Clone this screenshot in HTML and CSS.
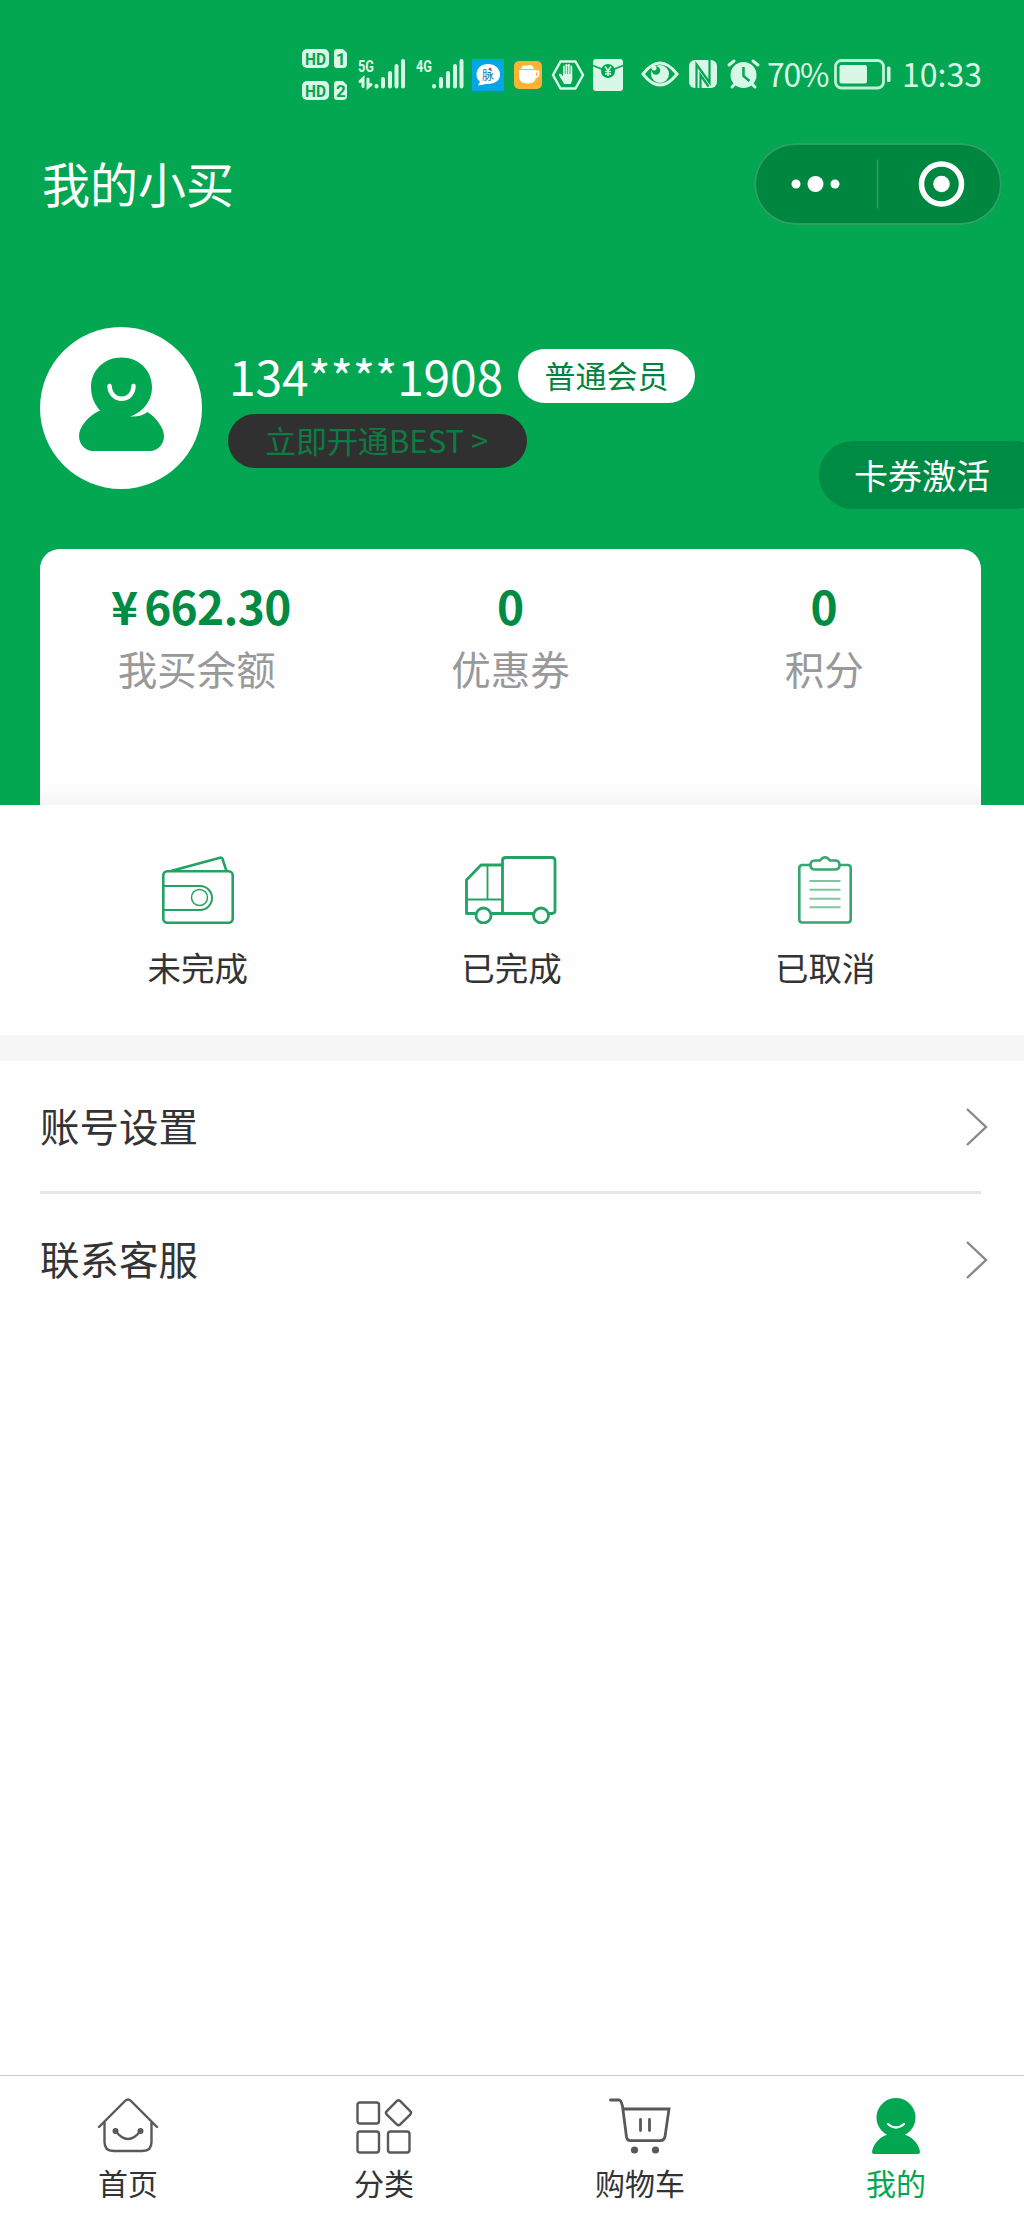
FILE: index.html
```html
<!DOCTYPE html>
<html lang="zh-CN">
<head>
<meta charset="utf-8">
<title>我的小买</title>
<link rel="stylesheet" href="styles.css">
</head>
<body>
<div class="page">
  <header class="hero">
    <div class="status">
      <svg class="status-icons" viewBox="300 45 462 60" width="462" height="60">
        <g fill="#d9f7e6">
          <rect x="302" y="49" width="27" height="19" rx="5"/><path d="M337 49h6l4 4v11a4 4 0 0 1-4 4h-6a3 3 0 0 1-3-3V52a3 3 0 0 1 3-3z"/>
          <rect x="302" y="81" width="27" height="19" rx="5"/><path d="M337 81h6l4 4v11a4 4 0 0 1-4 4h-6a3 3 0 0 1-3-3V84a3 3 0 0 1 3-3z"/>
        </g>
        <g class="tag" fill="#05a552">
          <text x="305" y="64.500" textLength="21" lengthAdjust="spacingAndGlyphs">HD</text><text x="336" y="64.500">1</text>
          <text x="305" y="96.500" textLength="21" lengthAdjust="spacingAndGlyphs">HD</text><text x="336" y="96.500">2</text>
        </g>
        <g class="net" fill="#d9f7e6">
          <text x="358" y="72" textLength="16" lengthAdjust="spacingAndGlyphs">5G</text><text x="416" y="72" textLength="16" lengthAdjust="spacingAndGlyphs">4G</text>
        </g>
        <g fill="none" stroke="#d9f7e6" stroke-width="4" stroke-linecap="round">
          <path d="M376.500 86v0.500M383 79v7.500M390 73v13.500M396.500 66v20.500M403 61v25.500M434 86v0.500M441 79v7.500M448 73v13.500M455 66v20.500M461.500 61v25.500"/>
          <path stroke-width="3" d="M363 86.500v-8l-3 3M368 79v8l3-2.500"/>
        </g>
        <rect x="472" y="59" width="32" height="32" fill="#05a6e6"/>
        <path fill="#fff" d="M488 64c7 0 12 4.500 12 10.500S495 84 488 84c-2 0-3 0-4 .5l-6 1 2-4c-3-2-3.500-4.500-3.500-7C476.500 68.500 481 64 488 64z"/>
        <text class="mai" x="482" y="79.500" fill="#1478b8">脉</text><circle cx="490" cy="69" r="1.300" fill="#e33"/>
        <rect x="514" y="61" width="28" height="28" rx="5" fill="#fcb232"/>
        <path fill="#fff" d="M519 70h17v6c0 5-3 7.500-8.500 7.500S519 81 519 76zM521 69c1-5 5-4 6-3 3-2 6-1 7 3z"/>
        <path fill="none" stroke="#fff" stroke-width="1.800" d="M535 71.500h3.500v2c0 3-2 4-4 4.500"/>
        <path fill="none" stroke="#d9f7e6" stroke-width="2.500" stroke-linejoin="round" d="M560.500 61.500h15l7.500 13.500-7.500 13.500h-15L553 75z"/>
        <path fill="#d9f7e6" d="M564 84c-1-3-4-6-5-9 0-2 2-1.500 3 0l1 1.500V67c0-2 2.200-2 2.200 0v-1.500c0-2 2.400-2 2.400 0v0c0-2 2.400-2 2.400 0v1.500c0-2 2.300-2 2.300 0v12c0 2-1 3.500-1.500 5z"/>
        <path stroke="#05a552" stroke-width=".7" d="M565.200 66v8M567.600 66v8M570 66v8"/>
        <rect x="593" y="59" width="30" height="32" rx="3" fill="#d9f7e6"/>
        <path fill="none" stroke="#05a552" stroke-width="1.800" d="M593 65.500l11 4.500M623 65.500l-11 4.500"/><circle cx="608" cy="71" r="7" fill="#05a552"/>
        <path fill="none" stroke="#d9f7e6" stroke-width="1.400" d="M605 66.500l3 4 3-4M608 70.500V76M605 71.500h6M605 74h6"/>
        <path fill="none" stroke="#d9f7e6" stroke-width="3" d="M643 74q17-22 34 0q-17 22-34 0z"/>
        <circle cx="660" cy="74" r="9" fill="#d9f7e6"/><circle cx="656" cy="70.500" r="4.200" fill="#05a552"/><circle cx="654" cy="68" r="2.500" fill="#d9f7e6"/>
        <rect x="689" y="60" width="28" height="28" rx="6" fill="#d9f7e6"/>
        <path fill="none" stroke="#05a552" stroke-width="2.200" d="M696.500 88V64.500l13 18M709.500 60v22.500l-13-18M700.500 88V75l8 11.500"/>
        <circle cx="743.500" cy="75" r="13" fill="#d9f7e6"/><path fill="none" stroke="#d9f7e6" stroke-width="3" stroke-linecap="round" d="M729 65l5-4M758 65l-5-4M735 84l-3 3M752 84l3 3"/>
        <path fill="none" stroke="#05a552" stroke-width="2.500" d="M743.500 67v9l6 5"/>
      </svg>
      <span class="percent">70%</span>
      <svg class="battery" viewBox="0 0 58 31" width="58" height="31">
        <rect x="1.500" y="1.500" width="48" height="27.500" rx="6" fill="none" stroke="#c2f0d6" stroke-width="2.800"/>
        <rect x="5.500" y="6" width="27.500" height="18.500" rx="2" fill="#d9f7e6"/><rect x="53" y="7.500" width="3.500" height="15.500" rx="1.500" fill="#d9f7e6"/>
      </svg>
      <span class="clock">10:33</span>
    </div>
    <div class="navbar">
      <h1 class="title">我的小买</h1>
      <div class="capsule">
        <svg viewBox="0 0 248 82" width="248" height="82">
          <g fill="#fff"><circle cx="42" cy="41" r="4.500"/><circle cx="61.500" cy="41" r="8"/><circle cx="81" cy="41" r="4.500"/><circle cx="187.500" cy="41" r="8.300"/></g>
          <path stroke="#2f9f60" stroke-width="1.500" d="M123.500 16.500v49"/><circle cx="187.500" cy="41" r="20" fill="none" stroke="#fff" stroke-width="5.500"/>
        </svg>
      </div>
    </div>
    <div class="profile">
      <svg class="avatar" viewBox="0 0 162 162" width="162" height="162">
        <circle cx="81" cy="81" r="81" fill="#fff"/>
        <path fill="#03a651" d="M81.500 30.500c17.500 0 30.500 13 30.500 29.500 0 15-10 25.500-22 29.500 7 .5 13-1 17.500-4.500C116 90 124 101 124 109c0 8-6 15-14 15H53c-8 0-14-7-14-15 0-9 9-20 21-25.500C54 77 51 69 51 60c0-16.500 13-29.500 30.500-29.500z"/>
        <path fill="none" stroke="#fff" stroke-width="4.500" stroke-linecap="round" d="M69.500 59c1 17 23.500 17 24 0"/>
      </svg>
      <div class="user">
        <div class="user-line"><span class="phone">134****1908</span><span class="level">普通会员</span></div>
        <div class="best">立即开通BEST &gt;</div>
      </div>
    </div>
    <div class="activate-row"><div class="activate">卡券激活</div></div>
    <div class="card">
      <div class="stat"><b>¥ 662.30</b><span>我买余额</span></div>
      <div class="stat"><b>0</b><span>优惠券</span></div>
      <div class="stat"><b>0</b><span>积分</span></div>
    </div>
  </header>
  <section class="orders">
    <div class="order">
      <svg viewBox="0 0 72 68" width="72" height="68" fill="none" stroke="#24a263" stroke-width="2.600" stroke-linejoin="round">
        <rect x="1.300" y="15.300" width="69.400" height="51.400" rx="4"/><path d="M9 15L58 1.800q2-.6 2.500 1.200L64.500 15"/><g stroke-width="2"><path d="M2 30h36a12 12 0 0 1 0 24H2"/><circle cx="37.500" cy="41.500" r="8" stroke-width="1.500"/></g>
      </svg><span>未完成</span>
    </div>
    <div class="order">
      <svg viewBox="0 0 92 68" width="92" height="68" fill="none" stroke="#24a263" stroke-width="2.800" stroke-linejoin="round">
        <path d="M10.500 57.500H1.500V24L16 9h21.500M26.500 57.500H68M84 57.500h3q3 0 3-3V4.500q0-3-3-3H41q-3.500 0-3.500 3v53"/><g stroke-width="1.800"><path d="M1.500 43.500h36M22.500 9v34.500"/></g><circle cx="18.500" cy="59.500" r="7.500"/><circle cx="76" cy="59.500" r="7.500"/>
      </svg><span>已完成</span>
    </div>
    <div class="order">
      <svg viewBox="0 0 54 68" width="54" height="68" fill="none" stroke="#38a66f" stroke-width="2.600" stroke-linejoin="round">
        <path d="M12.500 9H4.500Q1.300 9 1.300 12v51.500q0 3 3 3h45.400q3 0 3-3V12q0-3-3-3h-8"/><path d="M22 4.500q5-6.500 10 0h5q4.500 0 4.500 4.500t-4.500 4.500H17q-4.500 0-4.500-4.500t4.500-4.500z"/><path stroke="#80c4a0" stroke-width="2" d="M11.500 25H42.500M11.500 33.700H42.500M11.500 42.700H42.500M11.500 51.300H42.500"/>
      </svg><span>已取消</span>
    </div>
  </section>
  <nav class="menu">
    <div class="menu-row"><span>账号设置</span><svg viewBox="0 0 22 38" width="22" height="38"><path fill="none" stroke="#888" stroke-width="2.400" d="M1 1l19 18L1 37"/></svg></div>
    <div class="menu-row"><span>联系客服</span><svg viewBox="0 0 22 38" width="22" height="38"><path fill="none" stroke="#888" stroke-width="2.400" d="M1 1l19 18L1 37"/></svg></div>
  </nav>
  <footer class="tabs">
    <div class="tab">
      <svg viewBox="0 0 62 56" width="62" height="56" fill="none" stroke="#595959" stroke-width="2.400" stroke-linecap="round" stroke-linejoin="round"><path d="M2 29L28 3q3-3 6 0l26 26M7.500 24v20q0 9 9 9h29q9 0 9-9V24"/><path d="M18.500 33q12.500 16 25 0"/><g fill="#595959" stroke="none"><circle cx="18.500" cy="33" r="3"/><circle cx="43.500" cy="33" r="3"/></g></svg><span>首页</span>
    </div>
    <div class="tab">
      <svg viewBox="0 0 58 56" width="58" height="56" fill="none" stroke="#595959" stroke-width="2.400"><rect x="2.500" y="4.500" width="21.500" height="21" rx="2.500"/><rect x="2.500" y="33.500" width="21.500" height="21" rx="2.500"/><rect x="33" y="33.500" width="21.500" height="21" rx="2.500"/><rect x="34" y="5.300" width="19" height="19" rx="2.500" transform="rotate(45 43.500 14.800)"/></svg><span>分类</span>
    </div>
    <div class="tab">
      <svg viewBox="0 0 62 56" width="62" height="56" fill="none" stroke="#595959" stroke-width="2.800" stroke-linecap="round"><path d="M1.500 2H10q2 0 3.500 6l4 31q.7 3.700 4 3.700H52q3 0 4-4L60 11H14M31.500 21.500v11M40.500 21.500v11"/><g fill="#595959" stroke="none"><circle cx="25.500" cy="52" r="3.600"/><circle cx="46.500" cy="52" r="3.600"/></g></svg><span>购物车</span>
    </div>
    <div class="tab tab-on">
      <svg viewBox="0 0 48 56" width="48" height="56"><path fill="#03a651" d="M24 0a19.500 19.500 0 0 1 9 36.800C42 40 47 47 48 54q0 2-2 2H2q-2 0-2-2C1 47 6 40 15 36.800A19.500 19.500 0 0 1 24 0z"/><path fill="none" stroke="#fff" stroke-width="2.300" stroke-linecap="round" d="M16 26q8 7 16 0"/></svg><span>我的</span>
    </div>
  </footer>
</div>
</body>
</html>
```
FILE: styles.css
```css
* { box-sizing: border-box; }
body {
  margin: 0;
  background: #fefefe;
  color: #333;
  font-family: "Noto Sans CJK SC", sans-serif;
}
svg { display: block; flex: none; }
.page {
  display: flex;
  flex-direction: column;
  width: 1024px;
  height: 2218px;
  overflow: hidden;
}
.hero { height: 805px; background: #03a651; overflow: hidden; }

.status {
  display: flex;
  align-items: center;
  height: 105px;
  padding: 45px 0 0 300px;
  color: #d9f7e6;
  font-size: 32px;
  line-height: 57px;
}
.tag { font: bold 17px "Roboto", sans-serif; }
.net { font: bold 16px "Roboto", sans-serif; }
.mai { font-size: 12px; }
.percent { width: 67px; margin-left: 5px; height: 60px; letter-spacing: -1.2px; }
.battery { margin-top: -2px; }
.clock { margin-left: 10px; height: 60px; }

.navbar {
  display: flex;
  justify-content: space-between;
  height: 120px;
  padding: 38px 22px 0 42px;
}
.title { margin: 0; font-size: 48px; font-weight: 400; line-height: 79px; color: #fff; }
.capsule {
  width: 248px;
  height: 82px;
  border-radius: 41px;
  background: #00873f;
  box-shadow: inset 0 0 0 2px #2ba263;
}

.profile { display: flex; height: 216px; padding: 102px 0 0 40px; }
.user { margin-left: 26px; padding-top: 22px; }
.user-line { display: flex; height: 54px; }
.phone { width: 287px; padding-left: 1px; font-size: 48px; line-height: 53px; letter-spacing: -0.2px; color: #fff; }
.level {
  width: 177px;
  margin-left: 3px;
  border-radius: 27px;
  background: #fff;
  color: #00833e;
  font-size: 31px;
  line-height: 52px;
  text-align: center;
}
.best {
  width: 299px;
  height: 54px;
  margin-top: 11px;
  padding-left: 37px;
  border-radius: 27px;
  background: #303030;
  color: #0d7c43;
  font-size: 31px;
  line-height: 52px;
  white-space: nowrap;
}
.activate-row { display: flex; justify-content: flex-end; height: 108px; }
.activate {
  flex: none;
  width: 230px;
  height: 68px;
  margin-right: -25px;
  padding-left: 35px;
  border-radius: 34px;
  background: #008b45;
  color: #fff;
  font-size: 34px;
  line-height: 68px;
}
.card {
  display: grid;
  grid-template-columns: repeat(3, 1fr);
  width: 941px;
  height: 256px;
  margin-left: 40px;
  padding-top: 28px;
  border-radius: 20px 20px 0 0;
  background: linear-gradient(#fefefe 235px, #f5f5f5);
  text-align: center;
}
.stat b { display: block; height: 60px; font-size: 46px; line-height: 56px; color: #008b45; }
.stat:first-child b { padding-left: 8px; letter-spacing: -0.7px; word-spacing: -3px; }
.stat span { display: block; font-size: 39.500px; line-height: 61px; color: #999; }

.orders {
  display: grid;
  grid-template-columns: repeat(3, 1fr);
  height: 256px;
  padding: 51px 42px 0 41px;
  border-bottom: 26px solid #f6f6f6;
}
.order { display: flex; flex-direction: column; align-items: center; }
.order span { margin-top: 18px; font-size: 33.500px; line-height: 50px; }

.menu { padding: 0 36px 0 40px; }
.menu-row {
  display: flex;
  align-items: center;
  justify-content: space-between;
  height: 132px;
  font-size: 39.500px;
}
.menu-row span { padding-bottom: 5px; }
.menu-row + .menu-row {
  height: 137px;
  margin-top: -2px;
  background: linear-gradient(#e6e6e6, #e6e6e6) 0 0 / 941px 3px no-repeat;
}

.tabs {
  display: flex;
  height: 143px;
  margin-top: auto;
  padding-top: 22px;
  border-top: 1px solid #ccc;
}
.tab { display: flex; flex: 1; flex-direction: column; align-items: center; font-size: 30px; }
.tab span { margin-top: 6px; line-height: 44px; }
.tab-on { color: #03a651; }
```
